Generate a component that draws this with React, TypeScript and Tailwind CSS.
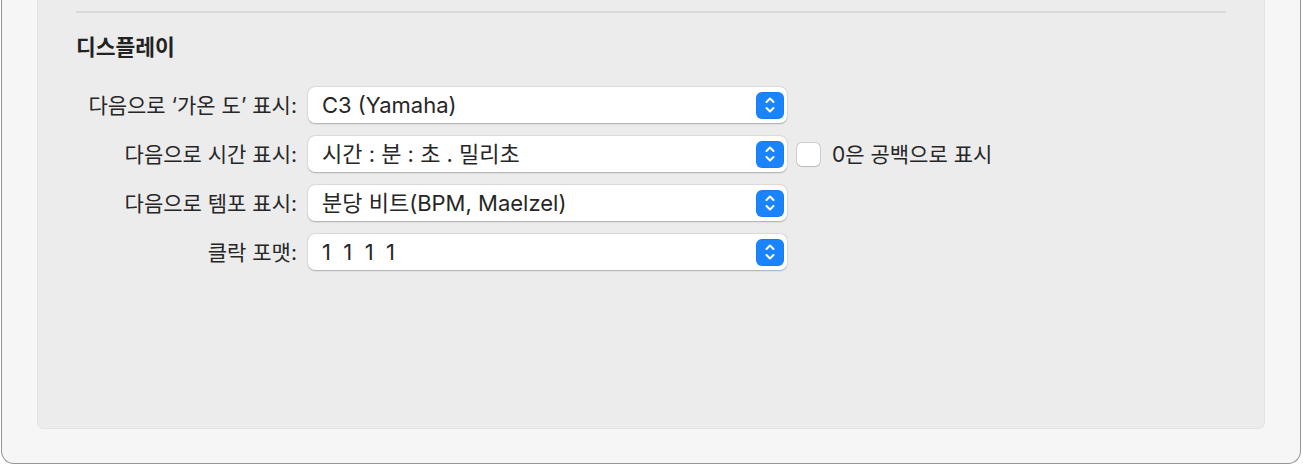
import React from "react";

const font = { fontFamily: 'Inter, "Noto Sans CJK KR", "Noto Sans", sans-serif' };

function Stepper() {
  return (
    <div className="flex h-[27px] w-[28px] items-center justify-center rounded-[6px] bg-[#1a84ff] shadow-[inset_0_0_0_0.5px_rgba(0,0,0,0.1)]">
      <svg width="14" height="22" viewBox="0 0 14 22" fill="none">
        <path d="M3.5 8 L7 4.5 L10.5 8" stroke="white" strokeWidth="2" strokeLinecap="round" strokeLinejoin="round" />
        <path d="M3.5 14 L7 17.5 L10.5 14" stroke="white" strokeWidth="2" strokeLinecap="round" strokeLinejoin="round" />
      </svg>
    </div>
  );
}

function Popup({ value }: { value: string }) {
  return (
    <div className="flex h-[36px] w-[479px] items-center justify-between rounded-[7px] bg-white pl-[14px] pr-[3px] shadow-[0_0.5px_1.5px_rgba(0,0,0,0.25),0_0_0_0.5px_rgba(0,0,0,0.06)]">
      <span className="whitespace-pre text-[22px] leading-none text-[#262626]">{value}</span>
      <Stepper />
    </div>
  );
}

function Row({ label, value, extra }: { label: string; value: string; extra?: React.ReactNode }) {
  return (
    <div className="flex items-center">
      <div className="w-[221px] whitespace-nowrap text-right text-[21px] leading-none text-[#262626]">{label}</div>
      <div className="ml-[11px]">
        <Popup value={value} />
      </div>
      {extra}
    </div>
  );
}

export default function App() {
  return (
    <div className="h-[466px] w-[1303px] bg-white" style={font}>
      <div className="ml-px h-[464px] w-[1300px] rounded-b-[13px] border-x border-b border-[#959595] bg-[#f6f6f6] px-[35px] pb-[34px]">
        <div className="h-full rounded-b-[7px] border-x border-b border-[#e3e3e3] bg-[#ececec] px-[38px] pt-[11px]">
          <div className="h-[2px] bg-[#d9d9d9]" />
          <div className="mt-[20px] h-[28px] text-[21.5px] font-bold leading-[28px] text-[#222]">디스플레이</div>
          <div className="mt-[26px] flex flex-col gap-[13px]">
            <Row label="다음으로 ‘가온 도’ 표시:" value="C3 (Yamaha)" />
            <Row
              label="다음으로 시간 표시:"
              value="시간 : 분 : 초 . 밀리초"
              extra={
                <div className="ml-[10px] flex items-center gap-[12px]">
                  <div className="h-[23px] w-[23px] rounded-[5px] bg-white shadow-[0_0_0_1px_rgba(0,0,0,0.12),0_0.5px_1px_rgba(0,0,0,0.1)]" />
                  <span className="text-[21px] leading-none text-[#262626]">0은 공백으로 표시</span>
                </div>
              }
            />
            <Row label="다음으로 템포 표시:" value="분당 비트(BPM, Maelzel)" />
            <Row label="클락 포맷:" value="1  1  1  1" />
          </div>
        </div>
      </div>
    </div>
  );
}
